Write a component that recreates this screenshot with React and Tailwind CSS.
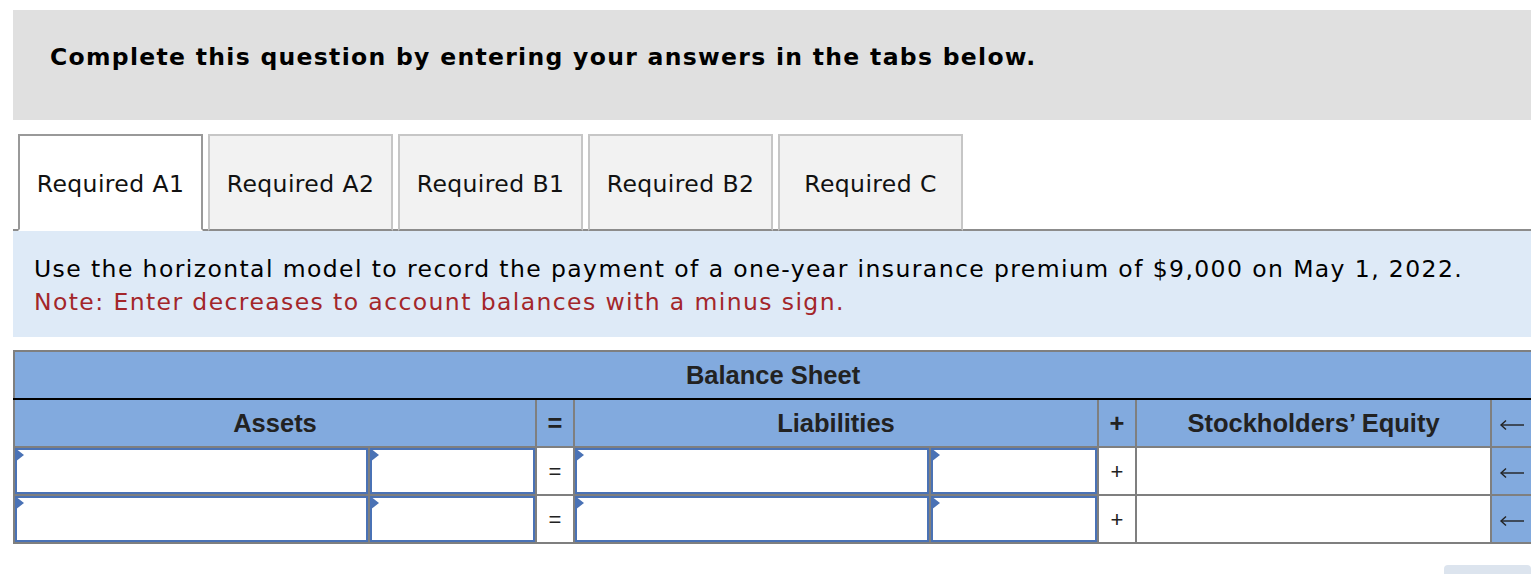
import React from "react";

const tabs = ["Required A1", "Required A2", "Required B1", "Required B2", "Required C"];

const Arrow = () => (
  <svg width="26" height="12" viewBox="0 0 26 12" className="mx-auto block" fill="none" stroke="#222" strokeWidth="1.4">
    <path d="M2 6 H25" />
    <path d="M7 1.5 L2 6 L7 10.5" />
  </svg>
);

// small blue flag in the corner of an answer box
const InputBox = () => (
  <div className="relative h-[46px] w-full border-2 border-[#4a72b5] bg-white">
    <span className="absolute -left-[2px] -top-[2px] h-0 w-0 border-y-[7px] border-l-[9px] border-y-transparent border-l-[#4a72b5]" />
  </div>
);

const BodyRow = () => (
  <tr className="h-[48px]">
    <td className="border-2 border-[#7f7f7f] p-0"><InputBox /></td>
    <td className="border-2 border-[#7f7f7f] p-0"><InputBox /></td>
    <td className="border-2 border-[#7f7f7f] bg-white text-center text-[22px] text-[#222]">=</td>
    <td className="border-2 border-[#7f7f7f] p-0"><InputBox /></td>
    <td className="border-2 border-[#7f7f7f] p-0"><InputBox /></td>
    <td className="border-2 border-[#7f7f7f] bg-white text-center text-[22px] text-[#222]">+</td>
    <td className="border-2 border-[#7f7f7f] bg-white"></td>
    <td className="border-2 border-[#7f7f7f] bg-[#82aade] pt-[4px]"><Arrow /></td>
  </tr>
);

export default function App() {
  return (
    <div className="min-h-[574px] overflow-hidden bg-white pl-[13px] pt-[10px] [font-family:'DejaVu_Sans',Verdana,sans-serif]">
      {/* Instructions banner */}
      <div className="flex h-[110px] items-start bg-[#e0e0e0] pl-[37px] pt-[30px]">
        <h2 className="text-[23.5px] font-bold tracking-[1.3px] text-black">
          Complete this question by entering your answers in the tabs below.
        </h2>
      </div>

      {/* Tabs */}
      <div className="mt-[14px] flex gap-[5px] border-b-2 border-[#8c8c8c] pl-[5px]">
        {tabs.map((t, i) => (
          <div
            key={t}
            className={`-mb-[2px] flex h-[97px] w-[185px] items-center justify-center border-2 pt-[4px] text-[23.5px] tracking-[0.4px] text-[#111] ${
              i === 0
                ? "border-[#999] border-b-white bg-white"
                : "border-[#c6c6c6] border-b-[#8c8c8c] bg-[#f2f2f2]"
            }`}
          >
            {t}
          </div>
        ))}
      </div>

      {/* Question text */}
      <div className="bg-[#deeaf7] pb-[18px] pl-[21px] pt-[22px] text-[23.5px] leading-[33px] tracking-[1.4px]">
        <p className="text-black">
          Use the horizontal model to record the payment of a one-year insurance premium of $9,000 on May 1, 2022.
        </p>
        <p className="text-[#a3262a]">Note: Enter decreases to account balances with a minus sign.</p>
      </div>

      {/* Horizontal model */}
      <table className="mt-[13px] w-[1518px] table-fixed border-collapse [font-family:'Liberation_Sans',Arial,sans-serif]">
        <colgroup>
          <col className="w-[355px]" />
          <col className="w-[167px]" />
          <col className="w-[38px]" />
          <col className="w-[356px]" />
          <col className="w-[168px]" />
          <col className="w-[38px]" />
          <col className="w-[355px]" />
          <col className="w-[41px]" />
        </colgroup>
        <thead>
          <tr className="h-[48px]">
            <th colSpan={8} className="border-2 border-[#7f7f7f] border-b-black bg-[#82aade] text-[25.5px] font-bold text-[#222]">
              Balance Sheet
            </th>
          </tr>
          <tr className="h-[48px] bg-[#82aade] text-[25.5px] font-bold text-[#222]">
            <th colSpan={2} className="border-2 border-[#7f7f7f] border-t-black">Assets</th>
            <th className="border-2 border-[#7f7f7f] border-t-black">=</th>
            <th colSpan={2} className="border-2 border-[#7f7f7f] border-t-black">Liabilities</th>
            <th className="border-2 border-[#7f7f7f] border-t-black">+</th>
            <th className="border-2 border-[#7f7f7f] border-t-black">Stockholders’ Equity</th>
            <th className="border-2 border-[#7f7f7f] border-t-black pt-[4px]"><Arrow /></th>
          </tr>
        </thead>
        <tbody>
          <BodyRow />
          <BodyRow />
        </tbody>
      </table>

      <div className="mt-[21px] flex justify-end">
        <div className="h-[12px] w-[87px] rounded-t-[4px] bg-[#dce4ee]" />
      </div>
    </div>
  );
}
